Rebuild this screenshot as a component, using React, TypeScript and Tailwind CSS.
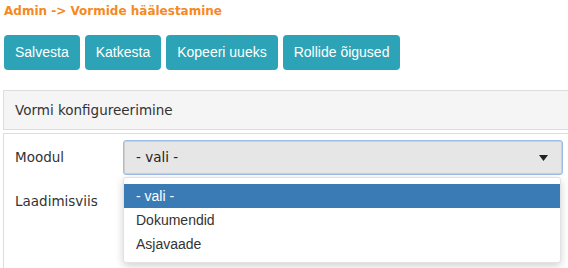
const BUTTONS = ["Salvesta", "Katkesta", "Kopeeri uueks", "Rollide õigused"];
const OPTIONS = ["- vali -", "Dokumendid", "Asjavaade"];

const verdana = "font-['Verdana','DejaVu_Sans',sans-serif]";
const arial = "font-['Liberation_Sans',Arial,sans-serif]";

export default function App() {
  return (
    <div className="relative h-[268px] w-[568px] overflow-hidden bg-white">
      <h1 className={`${verdana} px-1 pt-[2px] text-[12px] font-bold leading-[18px] text-[#f5891f]`}>
        Admin -&gt; Vormide häälestamine
      </h1>

      <div className="mt-[15px] flex gap-[5px] pl-1">
        {BUTTONS.map((b) => (
          <button
            key={b}
            type="button"
            className={`${arial} h-[35px] rounded-[4px] bg-[#2ca3b6] px-[11px] text-[14px] text-white`}
          >
            {b}
          </button>
        ))}
      </div>

      <div className="ml-[3px] mt-[20px] w-[600px]">
        <div className={`${verdana} h-[40px] border border-[#dddddd] bg-[#f5f5f5] pl-[11px] text-[13.5px] leading-[38px] text-[#333]`}>
          Vormi konfigureerimine
        </div>
        <div className="mt-[3px] h-[200px] border border-[#dddddd] pt-[6px] pl-[11px]">
          <div className="flex items-center">
            <label className={`${verdana} w-[108px] text-[13.5px] text-[#333]`}>Moodul</label>
            <div className="flex h-[35px] w-[440px] items-center justify-between rounded-[3px] border border-[#9fbbe8] bg-[#e6e6e6] pl-[12px] pr-[14px] shadow-[inset_0_0_0_1px_#cfcfcf]">
              <span className={`${verdana} text-[13.5px] text-[#222]`}>- vali -</span>
              <svg width="9" height="6" viewBox="0 0 9 6" aria-hidden>
                <path d="M0 0 L9 0 L4.5 6 Z" fill="#222" />
              </svg>
            </div>
          </div>
          <div className="mt-[14px] flex items-center">
            <label className={`${verdana} text-[13.5px] leading-[24px] text-[#333]`}>Laadimisviis</label>
          </div>
        </div>
      </div>

      <ul className={`${arial} absolute left-[123px] top-[177px] w-[438px] rounded-[3px] border border-[#e2e2e2] bg-white py-[6px] text-[14px] text-[#333] shadow-[0_3px_8px_rgba(0,0,0,0.18)]`}>
        {OPTIONS.map((o, i) => (
          <li
            key={o}
            className={`h-[24px] pl-[12px] leading-[24px] ${i === 0 ? "bg-[#3a7bb6] text-white" : ""}`}
          >
            {o}
          </li>
        ))}
      </ul>
    </div>
  );
}
